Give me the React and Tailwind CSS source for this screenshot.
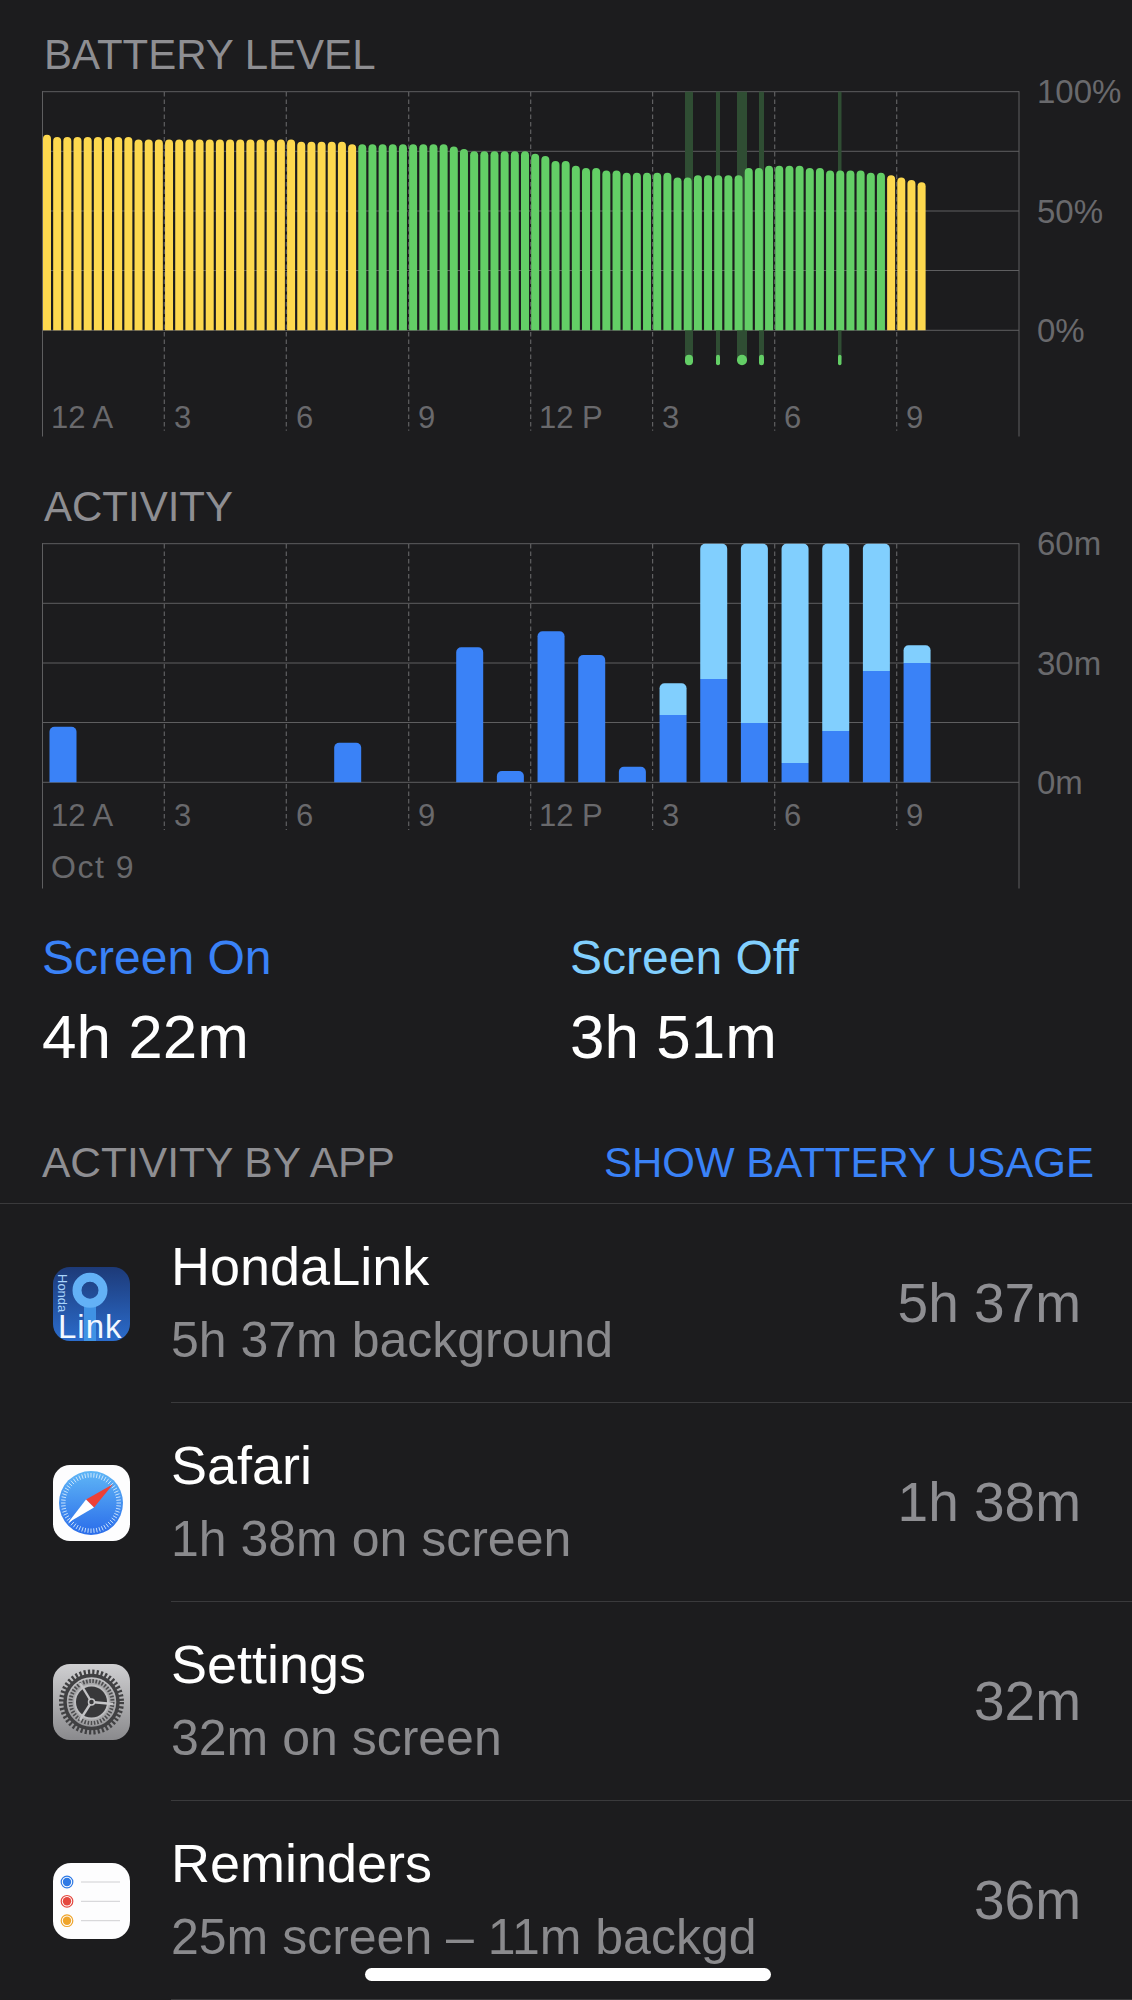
const batteryLevels = [
  82, 81, 81, 81, 81, 81, 81, 81, 81, 80, 80, 80, 80, 80, 80, 80, 80, 80, 80, 80, 80, 80, 80, 80, 80, 79, 79, 79, 79, 79, 78,
  78, 78, 78, 78, 78, 78, 78, 78, 78, 77, 76, 75, 75, 75, 75, 75, 75, 74, 73, 71, 71, 69, 68, 68, 67, 67, 66, 66, 66, 66, 66,
  64, 64, 65, 65, 65, 65, 65, 68, 68, 69, 69, 69, 69, 68, 68, 67, 67, 67, 67, 66, 66, 65, 64, 63, 62,
];

// hour, top of the bar, top of the dark part (plot coords)
const activityBars = [
  { hour: 0, top: 194.7 },
  { hour: 7, top: 210.7 },
  { hour: 10, top: 115.3 },
  { hour: 11, top: 239 },
  { hour: 12, top: 99.3 },
  { hour: 13, top: 123 },
  { hour: 14, top: 234.7 },
  { hour: 15, top: 151.3, split: 183 },
  { hour: 16, top: 11.7, split: 147 },
  { hour: 17, top: 11.7, split: 191 },
  { hour: 18, top: 11.7, split: 231 },
  { hour: 19, top: 11.7, split: 199 },
  { hour: 20, top: 11.7, split: 139 },
  { hour: 21, top: 113.3, split: 131 },
];

const chargeBands = [
  { x: 685, w: 8, pill: true },
  { x: 716, w: 4 },
  { x: 737, w: 10, pill: true },
  { x: 759, w: 5 },
  { x: 838, w: 3.5 },
];

const gridY = [11.7, 71.3, 131, 190.5, 250.3];
const dashX = [164.3, 286.3, 408.7, 530.7, 652.6, 774.7, 896.7];
const hourLabels = [
  { x: 51, text: "12 A" },
  { x: 174, text: "3" },
  { x: 296, text: "6" },
  { x: 418, text: "9" },
  { x: 539, text: "12 P" },
  { x: 662, text: "3" },
  { x: 784, text: "6" },
  { x: 906, text: "9" },
];

const topRounded = (x, top, w, bottom, r) =>
  `M${x} ${bottom}V${top + r}A${r} ${r} 0 0 1 ${x + r} ${top}H${x + w - r}A${r} ${r} 0 0 1 ${x + w} ${top + r}V${bottom}Z`;

const ChartFrame = ({ dashEnd, labelY, axis, extra, children }) => (
  <svg width="1132" height="370" viewBox="0 -10 1132 370" className="block">
    <line x1="42.5" x2="42.5" y1="11.2" y2="356.5" stroke="#5e5e60" strokeWidth="1" />
    <line x1="1019" x2="1019" y1="11.2" y2="356.5" stroke="#5e5e60" strokeWidth="1" />
    {gridY.map((y) => (
      <line key={y} x1="42" x2="1019" y1={y} y2={y} stroke="#5e5e60" strokeWidth="1" />
    ))}
    {dashX.map((x) => (
      <line key={x} x1={x} x2={x} y1="12" y2={dashEnd} stroke="#606062" strokeWidth="1.2" strokeDasharray="4.5 3" />
    ))}
    {children}
    {hourLabels.map((l) => (
      <text key={l.x} x={l.x} y={labelY} dominantBaseline="central" fill="#69696c" className="text-[31px]">
        {l.text}
      </text>
    ))}
    {axis.map((text, i) => (
      <text key={text} x="1037" y={gridY[i * 2]} dominantBaseline="central" fill="#69696c" className="text-[33px]">
        {text}
      </text>
    ))}
    {extra}
  </svg>
);

const BatteryBars = () => (
  <>
    {chargeBands.map((b) => (
      <rect key={b.x} x={b.x} y="11.7" width={b.w} height="268" fill="#2f4d33" />
    ))}
    {batteryLevels.map((level, i) => {
      const x = 43 + i * 10.17;
      const top = 250.3 - level * 2.386;
      const yellow = i < 31 || i > 82;
      return <path key={i} d={topRounded(x, top, 8, 250.3, 4)} fill={yellow ? "#fdd84e" : "#63ce66"} />;
    })}
    {chargeBands.map((b) => (
      <rect key={b.x} x={b.x} y="274.7" width={b.w} height="10.5" rx={b.w / 2} fill="#63ce66" />
    ))}
  </>
);

const ActivityBars = () => (
  <>
    {activityBars.map((b) => {
      const x = 49.5 + b.hour * 40.67;
      return (
        <g key={b.hour}>
          <path d={topRounded(x, b.top, 27, b.split ?? 250.3, 5)} fill={b.split ? "#81cffe" : "#3a82f7"} />
          {b.split && <rect x={x} y={b.split} width="27" height={250.3 - b.split} fill="#3a82f7" />}
        </g>
      );
    })}
  </>
);

const HondaIcon = () => (
  <svg width="77" height="84" viewBox="0 0 77 84" className="mt-[10px]">
    <defs>
      <linearGradient id="honda" x1="0" y1="0" x2="0" y2="1">
        <stop offset="0" stopColor="#1d3a78" />
        <stop offset="1" stopColor="#2b6ccc" />
      </linearGradient>
      <clipPath id="hondaClip">
        <rect width="77" height="74" rx="17" />
      </clipPath>
    </defs>
    <g clipPath="url(#hondaClip)">
      <rect width="77" height="74" fill="url(#honda)" />
      <rect x="31" y="36" width="12" height="38" fill="#3f92e4" />
      <circle cx="37" cy="23.3" r="13" fill="none" stroke="#63b1f6" strokeWidth="9" />
    </g>
    <text x="0" y="0" transform="translate(5 7) rotate(90)" fill="#a9d4fb" className="text-[13px]">
      Honda
    </text>
    <text x="5" y="70.5" fill="#f2f8ff" letterSpacing="1" className="text-[33px]">
      Link
    </text>
  </svg>
);

const SafariIcon = () => {
  const ticks = Array.from({ length: 60 }, (_, i) => (i * Math.PI) / 30);
  return (
    <svg width="77" height="76" viewBox="0 0 77 76">
      <defs>
        <linearGradient id="safari" x1="0" y1="0" x2="0" y2="1">
          <stop offset="0" stopColor="#5fb6f6" />
          <stop offset="1" stopColor="#2a6cea" />
        </linearGradient>
      </defs>
      <rect width="77" height="76" rx="17" fill="#fdfdfe" />
      <circle cx="38" cy="38" r="32" fill="url(#safari)" />
      {ticks.map((a, i) => (
        <line
          key={i}
          x1={38 + Math.cos(a) * 25.5}
          y1={38 + Math.sin(a) * 25.5}
          x2={38 + Math.cos(a) * 30}
          y2={38 + Math.sin(a) * 30}
          stroke="#d8ecfd"
          strokeWidth="0.9"
        />
      ))}
      <polygon points="60,19.3 33,34.5 41,42.5" fill="#ee4037" />
      <polygon points="15,57.7 33,34.5 41,42.5" fill="#ffffff" />
    </svg>
  );
};

const SettingsIcon = () => (
  <svg width="77" height="76" viewBox="0 0 77 76">
    <defs>
      <linearGradient id="settings" x1="0" y1="0" x2="0" y2="1">
        <stop offset="0" stopColor="#cfcfd1" />
        <stop offset="1" stopColor="#8a8a8d" />
      </linearGradient>
    </defs>
    <rect width="77" height="76" rx="17" fill="url(#settings)" />
    <circle cx="38.5" cy="38" r="30" fill="none" stroke="#404042" strokeWidth="5" strokeDasharray="2.2 2.1" />
    <circle cx="38.5" cy="38" r="26.5" fill="none" stroke="#404042" strokeWidth="3.5" />
    <circle cx="38.5" cy="38" r="23" fill="#a5a5a7" />
    <circle cx="38.5" cy="38" r="21" fill="none" stroke="#4c4c4e" strokeWidth="4" strokeDasharray="1.6 1.6" />
    <circle cx="38.5" cy="38" r="17.5" fill="#bdbdbf" />
    <circle cx="38.5" cy="38" r="15.5" fill="#38383a" />
    <g stroke="#c4c4c6" strokeWidth="2.4">
      <line x1="38.5" y1="38" x2="27" y2="19" />
      <line x1="38.5" y1="38" x2="60" y2="40" />
      <line x1="38.5" y1="38" x2="27" y2="56" />
    </g>
    <circle cx="38.5" cy="38" r="3" fill="#38383a" stroke="#c4c4c6" strokeWidth="1.5" />
  </svg>
);

const RemindersIcon = () => (
  <svg width="77" height="76" viewBox="0 0 77 76">
    <rect width="77" height="76" rx="18" fill="#fdfdfe" />
    {[
      { y: 19, color: "#2f7ae5" },
      { y: 38.3, color: "#e5483f" },
      { y: 57.7, color: "#efa52c" },
    ].map((r) => (
      <g key={r.y}>
        <circle cx="14" cy={r.y} r="5.8" fill="none" stroke={r.color} strokeWidth="1.2" />
        <circle cx="14" cy={r.y} r="4.2" fill={r.color} />
        <line x1="28" x2="67" y1={r.y} y2={r.y} stroke="#cfcfd2" strokeWidth="1" />
      </g>
    ))}
  </svg>
);

const apps = [
  { name: "HondaLink", detail: "5h 37m background", time: "5h 37m", icon: <HondaIcon /> },
  { name: "Safari", detail: "1h 38m on screen", time: "1h 38m", icon: <SafariIcon /> },
  { name: "Settings", detail: "32m on screen", time: "32m", icon: <SettingsIcon /> },
  { name: "Reminders", detail: "25m screen – 11m backgd", time: "36m", icon: <RemindersIcon /> },
];

const App = () => {
  return (
    <div className="relative h-[2000px] overflow-hidden bg-[#1c1c1e] font-['Liberation_Sans',sans-serif]">
      <h2 className="mt-[35px] -mb-[5px] h-[40px] pl-[44px] text-[42px] leading-[40px] text-[#8e8e92]">BATTERY LEVEL</h2>
      <ChartFrame dashEnd={350.7} labelY={337} axis={["100%", "50%", "0%"]}>
        <BatteryBars />
      </ChartFrame>

      <h2 className="mt-[47px] -mb-[5px] h-[40px] pl-[44px] text-[42px] leading-[40px] text-[#8e8e92]">ACTIVITY</h2>
      <ChartFrame
        dashEnd={298}
        labelY={283}
        axis={["60m", "30m", "0m"]}
        extra={
          <text x="51" y="335" dominantBaseline="central" fill="#69696c" letterSpacing="1.5" className="text-[32px]">
            Oct 9
          </text>
        }
      >
        <ActivityBars />
      </ChartFrame>

      <div className="mt-[36px] flex pl-[42px]">
        <div className="w-[528px]">
          <div className="h-[60px] text-[48px] leading-[60px] text-[#3a82f7]">Screen On</div>
          <div className="mt-[19px] h-[60px] text-[62px] leading-[60px] text-white">4h 22m</div>
        </div>
        <div>
          <div className="h-[60px] text-[48px] leading-[60px] text-[#81cffe]">Screen Off</div>
          <div className="mt-[19px] h-[60px] text-[62px] leading-[60px] text-white">3h 51m</div>
        </div>
      </div>

      <div className="mt-[76px] flex h-[61px] justify-between border-b border-[#3a3a3c] pr-[38px] pl-[42px] pb-[20px] leading-[40px]">
        <span className="text-[42.5px] text-[#8e8e92]">ACTIVITY BY APP</span>
        <span className="text-[42px] text-[#3a82f7]">SHOW BATTERY USAGE</span>
      </div>

      {apps.map((app) => (
        <div key={app.name} className="flex h-[199px]">
          <div className="flex w-[171px] shrink-0 items-center pl-[53px]">{app.icon}</div>
          <div className="flex flex-1 items-center justify-between border-b border-[#3a3a3c] pr-[51px]">
            <div>
              <div className="h-[60px] text-[54px] leading-[60px] text-white">{app.name}</div>
              <div className="mt-[14px] h-[60px] text-[50px] leading-[60px] text-[#8a8a8d]">{app.detail}</div>
            </div>
            <div className="text-[55px] text-[#8e8e92]">{app.time}</div>
          </div>
        </div>
      ))}

      <div className="absolute bottom-[19px] left-[365px] h-[13px] w-[406px] rounded-full bg-white" />
    </div>
  );
};

export default App;
